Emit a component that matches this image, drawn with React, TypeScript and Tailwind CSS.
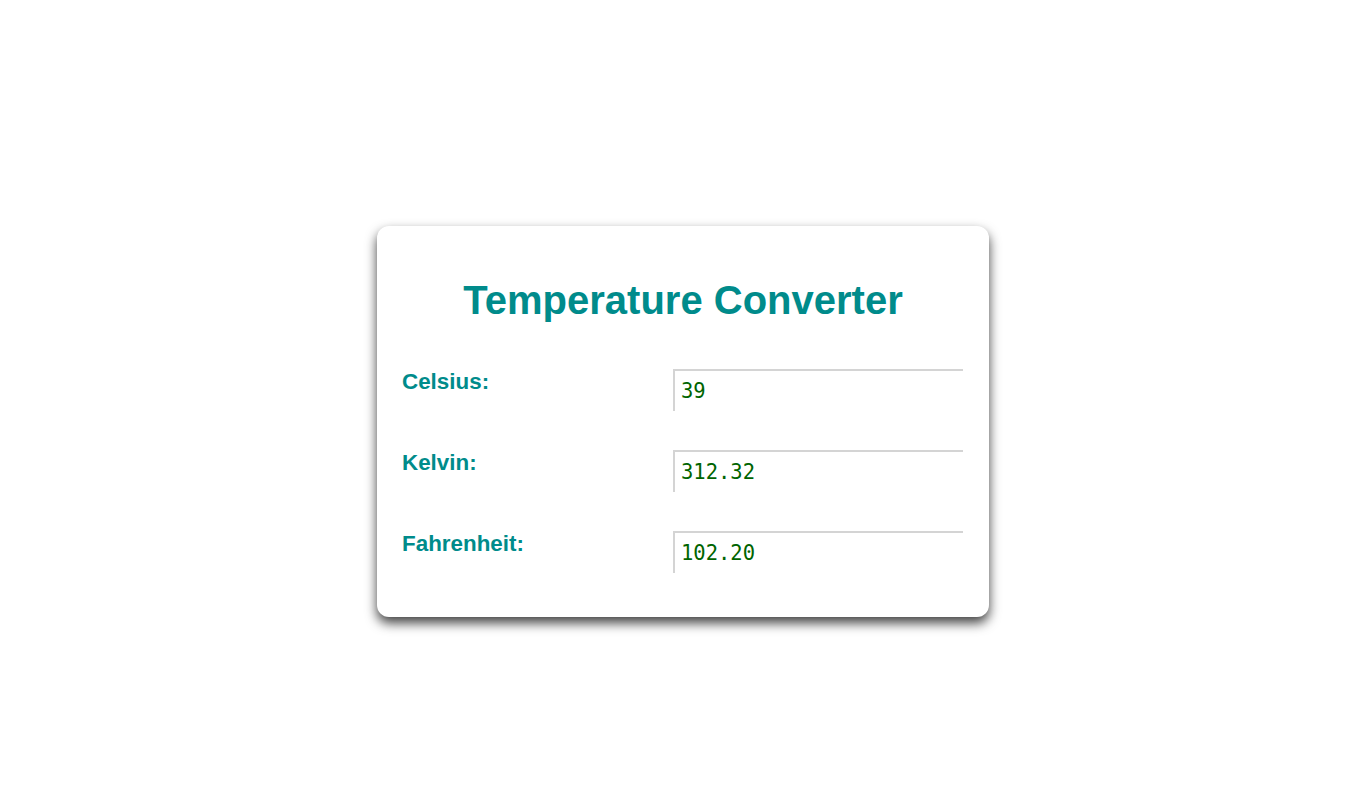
import { useState } from 'react';

const fields = [
  { key: 'c', label: 'Celsius:' },
  { key: 'k', label: 'Kelvin:' },
  { key: 'f', label: 'Fahrenheit:' },
] as const;

export default function App() {
  const [celsius, setCelsius] = useState('39');

  const c = parseFloat(celsius);
  const values: Record<string, string> = {
    c: celsius,
    k: isNaN(c) ? '' : (c + 273.32).toFixed(2),
    f: isNaN(c) ? '' : ((c * 9) / 5 + 32).toFixed(2),
  };

  return (
    <div className="w-full h-[800px] bg-white flex items-center justify-center pl-[11px] font-['Liberation_Sans',Arial,sans-serif]">
      <div className="w-[612px] mt-[43px] bg-white rounded-xl shadow-[0_6px_12px_rgba(0,0,0,0.75)] px-[25px] pt-[29px] pb-[44px]">
        <h1 className="text-[40px] leading-[46px] font-bold text-[#008b8b] text-center mt-[22px] mb-[46px]">
          Temperature Converter
        </h1>
        <div className="flex flex-col gap-[39px]">
          {fields.map((f) => (
            <div key={f.key} className="flex items-start">
              <label className="w-[271px] text-[22.4px] leading-[25px] font-bold text-[#008b8b]">
                {f.label}
              </label>
              <input
                value={values[f.key]}
                readOnly={f.key !== 'c'}
                onChange={(e) => f.key === 'c' && setCelsius(e.target.value)}
                className="w-[290px] h-[42px] bg-white border-t-2 border-l-2 border-[#d4d4d4] pl-[6px] text-[20.5px] text-[#006400] font-['DejaVu_Sans_Mono',monospace] outline-none"
              />
            </div>
          ))}
        </div>
      </div>
    </div>
  );
}
